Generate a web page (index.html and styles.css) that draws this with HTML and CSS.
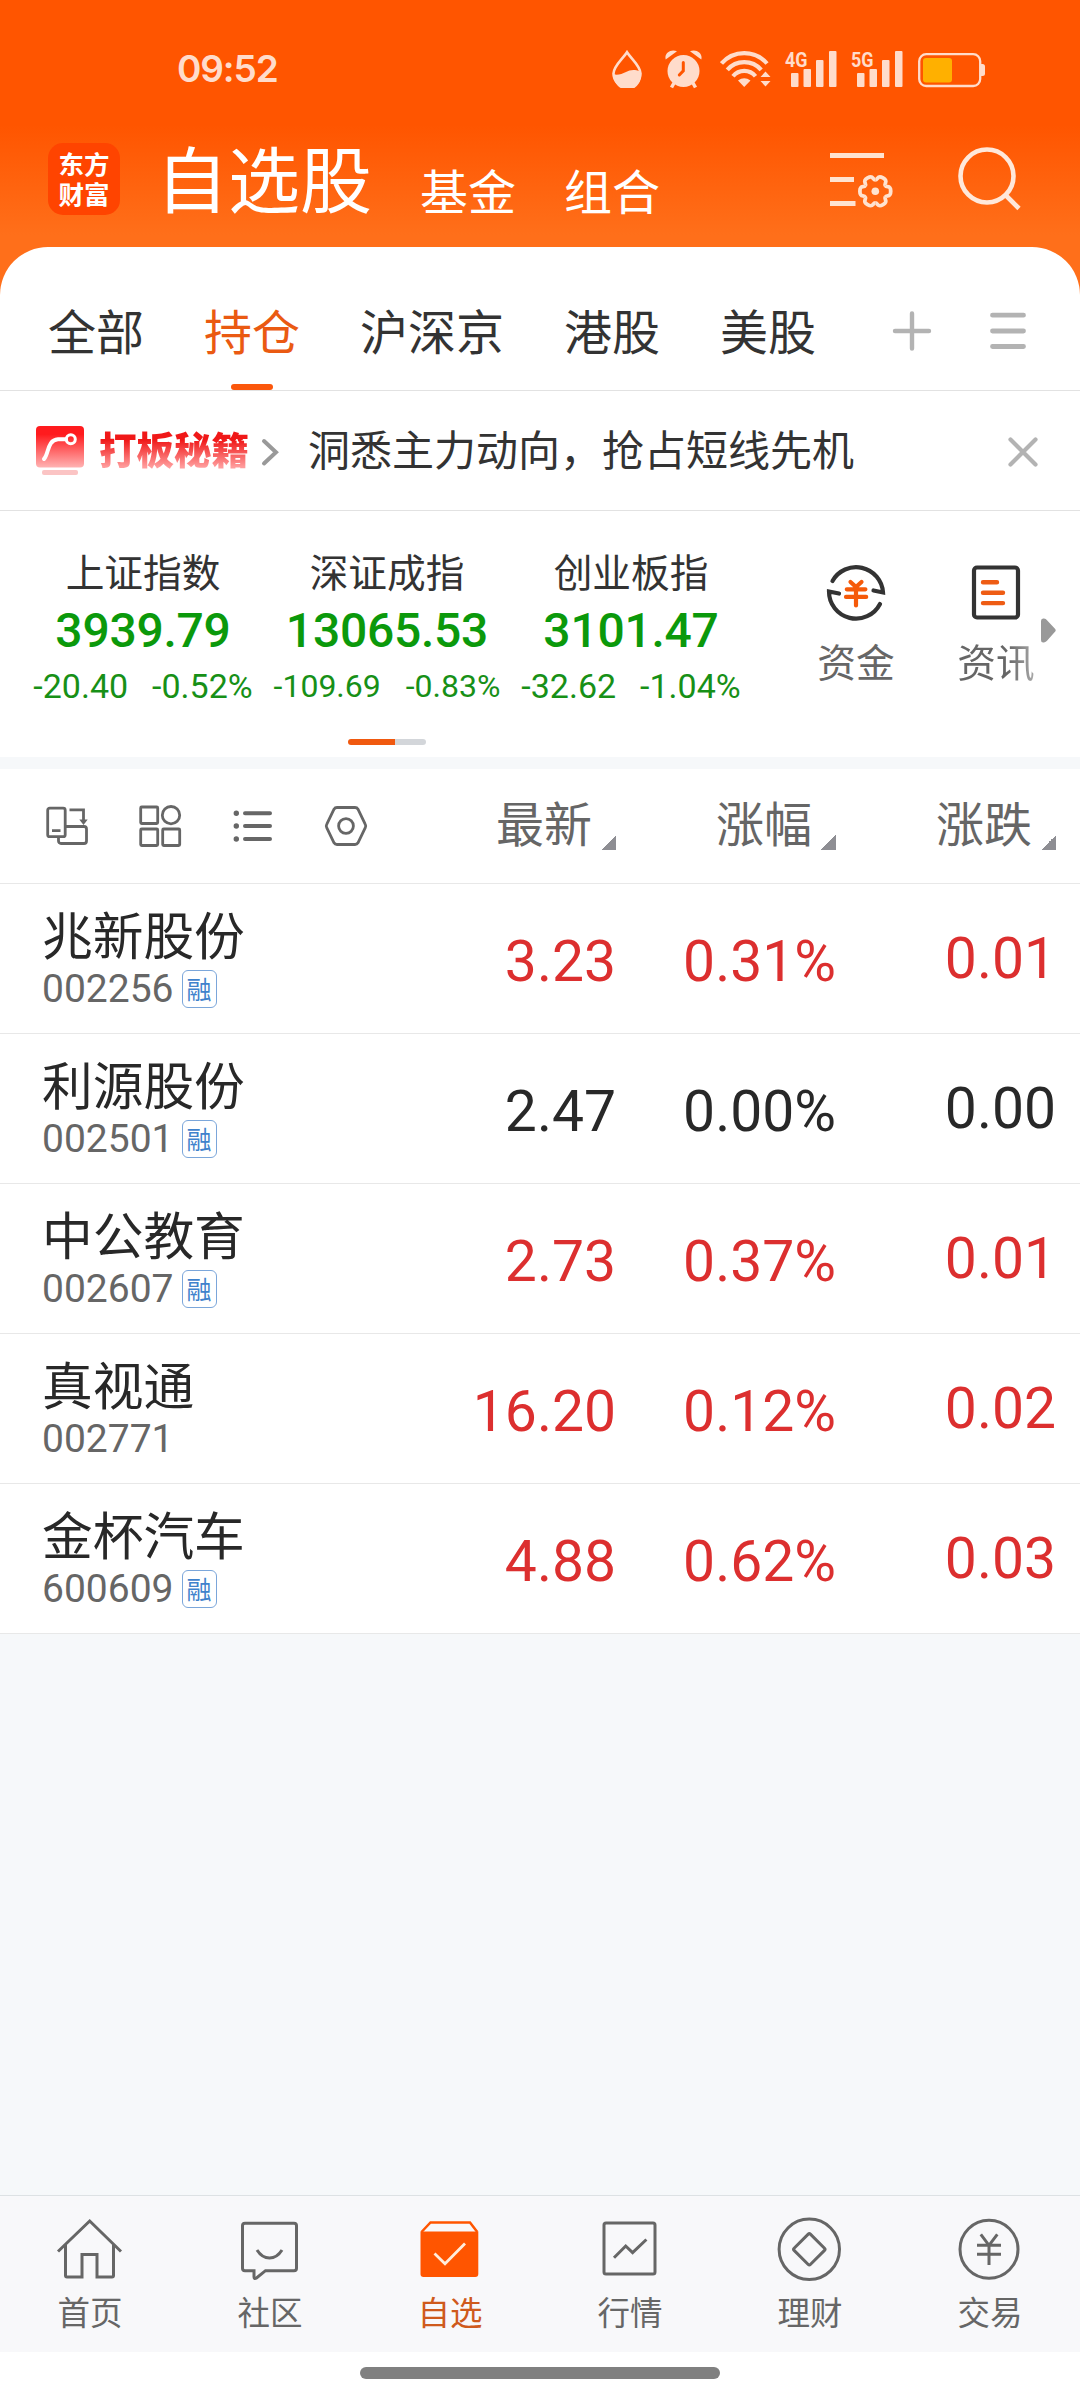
FILE: index.html
```html
<!DOCTYPE html>
<html lang="zh-CN">
<head>
<meta charset="utf-8">
<title>自选股</title>
<link rel="stylesheet" href="styles.css">
</head>
<body>
<div class="app">
  <div class="hero">
    <div class="status">
      <span class="time">09:52</span>
      <div class="status-icons">
        <svg class="i-drop" width="30" height="38" viewBox="0 0 30 38"><path d="M15 2.2C11 8.500 1.500 16 1.500 23.500a13.500 13.500 0 0 0 27 0C28.500 16 19 8.500 15 2.200z" fill="none" stroke="#ffdccb" stroke-width="2.600"/><path d="M2 24.500c5 .5 8-.5 12-2.500s8-3 14-.5a13.500 13.500 0 1 1-26 3z" fill="#ffdccb"/></svg>
        <svg class="i-alarm" width="37" height="39" viewBox="0 0 37 39"><g fill="#ffdccb"><circle cx="18.500" cy="21" r="16"/><path d="M.7 9.500C-1 3 6-1.500 12 1.300zM36.300 9.500C38 3 31-1.500 25 1.300z"/></g><path d="M9 33l-2.500 4.500M28 33l2.500 4.500" stroke="#ffdccb" stroke-width="3.500"/><path d="M18.300 12.500v8.300l-4 4.200" fill="none" stroke="#ff5500" stroke-width="3" stroke-linecap="round"/></svg>
        <svg class="i-wifi" width="51" height="38" viewBox="0 0 51 38"><g fill="none" stroke="#ffdccb" stroke-width="4.200"><path d="M1.500 13.500A30 30 0 0 1 47 13.500M7.300 19.800A22.500 22.500 0 0 1 41.200 19.800M13 26.300A14.500 14.500 0 0 1 35.500 26.300"/></g><g fill="#ffdccb"><path d="M18 30.500Q24.200 26 30.500 30.500L24.200 37zM40.500 27l5-5.500 5 5.500zM40.500 31h10l-5 5.500z"/></g></svg>
        <svg class="i-sig" width="52" height="38" viewBox="0 0 52 38" fill="#ffdccb"><text x="0" y="16.500" class="net" textLength="22.500" lengthAdjust="spacingAndGlyphs">4G</text><rect x="6" y="23" width="7.500" height="14" rx="1"/><rect x="18.500" y="19" width="7.500" height="18" rx="1"/><rect x="31" y="10" width="7.500" height="27" rx="1"/><rect x="44" y="1" width="7.500" height="36" rx="1"/></svg>
        <svg class="i-sig" width="52" height="38" viewBox="0 0 52 38" fill="#ffdccb"><text x="0" y="16.500" class="net" textLength="22.500" lengthAdjust="spacingAndGlyphs">5G</text><rect x="6" y="23" width="7.500" height="14" rx="1"/><rect x="18.500" y="19" width="7.500" height="18" rx="1"/><rect x="31" y="10" width="7.500" height="27" rx="1"/><rect x="44" y="1" width="7.500" height="36" rx="1"/></svg>
        <svg class="i-batt" width="68" height="35" viewBox="0 0 68 35"><rect x="1.200" y="1.200" width="61" height="31.800" rx="7" fill="none" stroke="#ffdccb" stroke-width="2.300"/><rect x="5" y="5" width="29" height="24.500" rx="3" fill="#ffb000"/><path d="M63 11h1.500q2.500 0 2.500 2.500v7q0 2.500-2.500 2.500H63z" fill="#ffdccb"/></svg>
      </div>
    </div>
    <header class="header">
      <div class="logo"><span>东方</span><span>财富</span></div>
      <h1 class="title">自选股</h1>
      <span class="seg">基金</span>
      <span class="seg">组合</span>
      <svg class="i-config" width="64" height="60" viewBox="0 0 64 60" fill="none" stroke="#ffe3d0"><path d="M0 5.500h54M0 29.500h24M0 53.500h25.500" stroke-width="4.800"/><g transform="translate(45.300 41.300)" stroke-width="3.800"><path d="M10-5.800C11.500-3.200 15.400-6.800 15.400 0S11.500 3.200 10 5.800"/><path d="M10-5.800C11.500-3.200 15.400-6.800 15.400 0S11.500 3.200 10 5.800" transform="rotate(60)"/><path d="M10-5.800C11.500-3.200 15.400-6.800 15.400 0S11.500 3.200 10 5.800" transform="rotate(120)"/><path d="M10-5.800C11.500-3.200 15.400-6.800 15.400 0S11.500 3.200 10 5.800" transform="rotate(180)"/><path d="M10-5.800C11.500-3.200 15.400-6.800 15.400 0S11.500 3.200 10 5.800" transform="rotate(240)"/><path d="M10-5.800C11.500-3.200 15.400-6.800 15.400 0S11.500 3.200 10 5.800" transform="rotate(300)"/><circle r="3.800" fill="#ffe3d0" stroke="none"/></g></svg>
      <svg class="i-search" width="66" height="66" viewBox="0 0 66 66" fill="none" stroke="#ffe8da" stroke-width="4.600"><circle cx="31" cy="31" r="26.500"/><path d="M49.500 50L63 63.500"/></svg>
    </header>
    <nav class="tabs">
      <span class="tab">全部</span>
      <span class="tab on">持仓</span>
      <span class="tab">沪深京</span>
      <span class="tab">港股</span>
      <span class="tab">美股</span>
      <svg class="i-plus" width="40" height="42" viewBox="0 0 40 42" stroke="#b3b3b3" stroke-width="4.400" stroke-linecap="round"><path d="M3 21h34M20 3.500v35"/></svg>
      <svg class="i-menu" width="38" height="42" viewBox="0 0 38 42" stroke="#b3b3b3" stroke-width="4.800" stroke-linecap="round"><path d="M3.500 5.200h31M3.500 21h31M3.500 36.500h31"/></svg>
    </nav>
  </div>

  <div class="notice">
    <svg width="48" height="50" viewBox="0 0 48 50"><defs><linearGradient id="red" x1="0" y1="0" x2="0" y2="1"><stop offset="0.200" stop-color="#ff1b1e"/><stop offset="1" stop-color="#ffb3b3"/></linearGradient></defs><rect width="48" height="41.500" rx="4" fill="url(#red)"/><rect x="6" y="44" width="36" height="5" rx="2" fill="#fbc4c4"/><g fill="none" stroke="#fff" stroke-linecap="round"><path d="M8 33C13 28 11 14 22 13.300L30 13.300" stroke-width="4"/><circle cx="34.800" cy="13.300" r="4.500" stroke-width="3"/></g></svg>
    <b class="promo">打板秘籍</b>
    <svg class="i-chev" width="18" height="30" viewBox="0 0 18 30" fill="none" stroke="#999" stroke-width="4" stroke-linecap="round"><path d="M3 4l12 11.300L3 26.500"/></svg>
    <span class="slogan">洞悉主力动向，抢占短线先机</span>
    <svg class="i-close" width="32" height="32" viewBox="0 0 32 32" stroke="#b3b3b3" stroke-width="4.200" stroke-linecap="round"><path d="M3.500 3.500l25 25M28.500 3.500l-25 25"/></svg>
  </div>

  <section class="market">
    <div class="indices">
      <div class="index"><span class="iname">上证指数</span><span class="ival">3939.79</span><span class="ichg"><i>-20.40</i><i>-0.52%</i></span></div>
      <div class="index"><span class="iname">深证成指</span><span class="ival">13065.53</span><span class="ichg small"><i>-109.69</i><i>-0.83%</i></span></div>
      <div class="index"><span class="iname">创业板指</span><span class="ival">3101.47</span><span class="ichg"><i>-32.62</i><i>-1.04%</i></span></div>
      <div class="pager"></div>
    </div>
    <div class="action">
      <svg width="64" height="64" viewBox="0 0 64 64" fill="none" stroke-width="4.200" stroke-linecap="round"><path stroke="#333" d="M8.500 21A27 27 0 0 1 59 32.500L49.500 30.500M56 44A27 27 0 0 1 5 31.500L15 33.500"/><path stroke="#f55a0a" d="M26.500 22l5.500 5 5.500-5M22.800 29.300h18.600M22 36.900h20.200M32 27v18.500"/></svg>
      <span>资金</span>
    </div>
    <div class="action news">
      <svg width="64" height="64" viewBox="0 0 64 64" fill="none"><rect x="10" y="7.500" width="44" height="50" rx="3" stroke="#333" stroke-width="4.200"/><path d="M19 22.300h14M19 32.700h20M19 43.100h20" stroke="#ee5c14" stroke-width="4.400" stroke-linecap="round"/></svg>
      <span class="fade">资讯</span>
    </div>
    <svg class="i-more" width="15" height="25" viewBox="0 0 15 25" fill="#999"><path d="M0 3Q0 0 3 .6Q5 1 6 2.200L14.200 11Q15.200 12.300 14.200 13.600L6 22.800Q5 24 3 24.400Q0 25 0 22z"/></svg>
  </section>

  <section class="list">
    <div class="row head">
      <div class="tools">
        <svg width="46" height="46" viewBox="0 0 46 46" fill="none" stroke="#666" stroke-width="2.800"><rect x="3.700" y="5.200" width="17.500" height="28.500" rx="2"/><path d="M8 27.700h8.500M25.500 6.800h14V18M22 23.500h18a2.500 2.500 0 0 1 2.500 2.500v12a2.500 2.500 0 0 1-2.500 2.500H17a2.500 2.500 0 0 1-2.500-2.500V34"/><path d="M35.300 16.500h8.400l-4.200 5.500z" fill="#666" stroke="none"/></svg>
        <svg width="46" height="46" viewBox="0 0 46 46" fill="none" stroke="#666" stroke-width="2.800"><rect x="3.700" y="4" width="17" height="16.500" rx="1"/><circle cx="34" cy="12.200" r="8.700"/><rect x="3.700" y="26" width="17" height="16.500" rx="1"/><rect x="25.700" y="26" width="17" height="16.500" rx="1"/></svg>
        <svg width="46" height="46" viewBox="0 0 46 46" stroke="#666" stroke-linecap="round"><path d="M15 10.300h25M15 23h25M15 36h25" stroke-width="4"/><path d="M6.300 10.300h.01M6.300 23h.01M6.300 36h.01" stroke-width="5.400"/></svg>
        <svg width="46" height="46" viewBox="0 0 46 46" fill="none" stroke="#666" stroke-width="2.800"><path d="M14 4.500H32Q34 4.500 35 6.200L42.300 21.300Q43.200 23 42.300 24.700L35 39.800Q34 41.500 32 41.500H14Q12 41.500 11 39.800L3.700 24.700Q2.800 23 3.700 21.300L11 6.200Q12 4.500 14 4.500z"/><circle cx="23" cy="23" r="7.400"/></svg>
      </div>
      <span class="col">最新<em class="tri"></em></span>
      <span class="col">涨幅<em class="tri"></em></span>
      <span class="col">涨跌<em class="tri"></em></span>
    </div>
    <div class="row up"><div class="stock"><span class="name">兆新股份</span><span class="code">002256<em class="tag">融</em></span></div><span class="num">3.23</span><span class="num">0.31%</span><span class="num diff">0.01</span></div>
    <div class="row"><div class="stock"><span class="name">利源股份</span><span class="code">002501<em class="tag">融</em></span></div><span class="num">2.47</span><span class="num">0.00%</span><span class="num diff">0.00</span></div>
    <div class="row up"><div class="stock"><span class="name">中公教育</span><span class="code">002607<em class="tag">融</em></span></div><span class="num">2.73</span><span class="num">0.37%</span><span class="num diff">0.01</span></div>
    <div class="row up"><div class="stock"><span class="name">真视通</span><span class="code">002771</span></div><span class="num">16.20</span><span class="num">0.12%</span><span class="num diff">0.02</span></div>
    <div class="row up"><div class="stock"><span class="name">金杯汽车</span><span class="code">600609<em class="tag">融</em></span></div><span class="num">4.88</span><span class="num">0.62%</span><span class="num diff">0.03</span></div>
  </section>

  <nav class="bottom">
    <div class="item"><svg width="70" height="66" viewBox="0 0 70 66" fill="none" stroke="#666" stroke-width="3"><path d="M3 35.500L34.700 5L66 35.500M10.500 29v30.500q0 1.500 1.500 1.500h15V38.500h15V61h15q1.500 0 1.500-1.500V29"/></svg><span>首页</span></div>
    <div class="item"><svg width="70" height="66" viewBox="0 0 70 66" fill="none" stroke="#666" stroke-width="3"><path d="M10 7.300H59Q61.500 7.300 61.500 9.800V52.200Q61.500 54.700 59 54.700H30.500L21.500 62Q19 63.500 19 61V54.700H10Q7.500 54.700 7.500 52.200V9.800Q7.500 7.300 10 7.300z"/><path d="M22 34Q27 42 34.500 42T47 34"/></svg><span>社区</span></div>
    <div class="item on"><svg width="70" height="66" viewBox="0 0 70 66"><path d="M6.500 16L15.500 6.500H55L62.300 16" fill="#f8f8fa" stroke="#ff5500" stroke-width="2.500"/><path d="M5.500 15.500H63.300V58q0 3-3 3H8.500q-3 0-3-3z" fill="#ff5500"/><path d="M19.500 37.500L30 47.700L50 27.500" fill="none" stroke="#ffeddc" stroke-width="2.800"/></svg><span>自选</span></div>
    <div class="item"><svg width="70" height="66" viewBox="0 0 70 66" fill="none" stroke="#666" stroke-width="3"><rect x="9" y="7" width="51" height="51" rx="2"/><path d="M19 41.700L30.700 30L37.600 36.700L51.400 23.500"/></svg><span>行情</span></div>
    <div class="item"><svg width="70" height="66" viewBox="0 0 70 66" fill="none" stroke="#666" stroke-width="3"><circle cx="34.300" cy="33.300" r="30.200"/><rect x="-11.500" y="-11.500" width="23" height="23" rx="1.500" transform="translate(34.300 33.300) rotate(45)"/></svg><span>理财</span></div>
    <div class="item"><svg width="70" height="66" viewBox="0 0 70 66" fill="none" stroke="#666" stroke-width="3"><circle cx="34" cy="33.300" r="29"/><path d="M25.800 18.300L34 29.300L42.300 18.300M22 29.300h24M22 38.300h24M34 29v20"/></svg><span>交易</span></div>
  </nav>
  <div class="gesture"><div class="handle"></div></div>
</div>
</body>
</html>
```
FILE: styles.css
```css
* { box-sizing: border-box; }

body {
  margin: 0;
  font-family: Roboto, "Noto Sans CJK SC", sans-serif;
  color: #333;
}

svg { display: block; flex: none; }
em, i { font-style: normal; }

.app {
  display: flex;
  flex-direction: column;
  width: 1080px;
  height: 2400px;
  background: #f6f8fa;
}

/* Orange area: status bar, header and rounded tab bar */
.hero { background: linear-gradient(#ff5500 125px, #ff6f1a 235px); }

.status {
  display: flex;
  height: 100px;
  padding: 50px 94px 0 177px;
}
.time {
  font: 600 37px/38px Inter, sans-serif;
  letter-spacing: -1.1px;
  color: #ffdccb;
}
.status-icons { display: flex; margin-left: auto; }
.i-alarm { margin-left: 23px; }
.i-wifi { margin-left: 18px; }
.i-sig { margin-left: 14px; overflow: visible; }
.i-batt { margin: 3px 0 0 15px; }
.net { font: 700 21px Roboto, sans-serif; }

.header {
  display: flex;
  align-items: flex-start;
  height: 147px;
  padding: 0 58px 0 48px;
  font-family: "Noto Sans CJK SC", sans-serif;
  color: #fff;
}
.logo {
  display: flex;
  flex-direction: column;
  width: 72px;
  height: 72px;
  margin-top: 43px;
  padding-top: 5px;
  border-radius: 15px;
  background: #ff4400;
  font-size: 25.500px;
  font-weight: 700;
  line-height: 30px;
  text-align: center;
}
.title {
  margin: 39px 0 0 36px;
  font-size: 72px;
  font-weight: 400;
  line-height: 73px;
}
.seg {
  margin: 65px 0 0 48px;
  font-size: 48px;
  line-height: 48px;
}
.i-config { margin: 50px 0 0 auto; }
.i-search { margin: 45px 0 0 62px; }

.tabs {
  display: flex;
  gap: 60px;
  height: 144px;
  padding: 57px 52px 0 48px;
  border-bottom: 1px solid #e2e2e2;
  border-radius: 48px 48px 0 0;
  background: #fff;
  font-family: "Noto Sans CJK SC", sans-serif;
  font-size: 48px;
  line-height: 50px;
}
.tab.on {
  display: flex;
  flex-direction: column;
  align-items: center;
  color: #ea5a12;
}
.tab.on::after {
  content: "";
  width: 42px;
  height: 6px;
  margin-top: 30px;
  border-radius: 3px;
  background: #fb570c;
}
.i-plus { margin: 6px 0 0 16px; }
.i-menu { margin: 6px 0 0 -3px; }

.notice {
  display: flex;
  align-items: center;
  height: 120px;
  padding: 0 41px 0 36px;
  border-bottom: 1px solid #e2e2e2;
  background: #fff;
  font-family: "Noto Sans CJK SC", sans-serif;
}
.promo {
  margin: -6px 0 0 15px;
  background: linear-gradient(#f01818 35%, #ff9c9c 85%);
  background-clip: text;
  -webkit-background-clip: text;
  color: transparent;
  font-size: 37.500px;
  font-weight: 900;
  line-height: 54px;
}
.i-chev { margin: 2px 0 0 12px; }
.slogan {
  margin: -5px 0 0 29px;
  font-size: 42px;
  line-height: 50px;
}
.i-close { margin: 3px 0 0 auto; }

/* Index quotes and shortcuts */
.market {
  display: flex;
  height: 246px;
  padding-left: 21px;
  background: #fff;
}
.indices {
  display: grid;
  grid-template-columns: repeat(3, 244px);
  grid-template-rows: 228px 6px;
}
.index {
  display: flex;
  flex-direction: column;
  align-items: center;
  padding-top: 38px;
}
.iname {
  font-family: "Noto Sans CJK SC", sans-serif;
  font-size: 38.700px;
  line-height: 42px;
}
.ival {
  margin-top: 10px;
  font-size: 48px;
  font-weight: 500;
  letter-spacing: -0.250px;
  line-height: 60px;
  color: #0b990b;
}
.ichg {
  display: flex;
  gap: 24px;
  margin-top: 5px;
  font-size: 34px;
  line-height: 40px;
  color: #179017;
}
.ichg.small { gap: 25px; font-size: 32px; line-height: 41px; }
.pager {
  grid-column: 2;
  justify-self: center;
  width: 78px;
  height: 6px;
  border-radius: 3px;
  background: linear-gradient(90deg, #f0590f 47px, #d3d6da 47px);
}
.action {
  display: flex;
  flex-direction: column;
  align-items: center;
  width: 78px;
  margin: 49px 0 0 64px;
  font-family: "Noto Sans CJK SC", sans-serif;
  font-size: 38.700px;
  line-height: 42px;
  color: #666;
}
.action span { margin-top: 15px; }
.action.news { margin-left: 62px; }
.fade {
  background: linear-gradient(90deg, #666 65%, #aaa);
  background-clip: text;
  -webkit-background-clip: text;
  color: transparent;
}
.i-more { margin: 107px 0 0 6px; }

/* Watch list */
.list { margin-top: 12px; background: #fff; }
.row {
  display: grid;
  grid-template-columns: 352px 220px 220px 220px;
  height: 150px;
  padding-left: 44px;
  border-bottom: 1px solid #e8e8e8;
  color: #282828;
}
.row.head {
  height: 115px;
  align-items: center;
  color: #666;
  font-family: "Noto Sans CJK SC", sans-serif;
}
.tools { display: flex; gap: 47px; }
.col {
  display: flex;
  justify-content: flex-end;
  font-size: 48px;
  line-height: 50px;
  padding-bottom: 6px;
}
.tri {
  width: 15px;
  height: 15px;
  margin: 39px 0 0 9px;
  background: linear-gradient(135deg, transparent 50%, #8e8e93 50%);
}
.stock { display: flex; flex-direction: column; padding-top: 22px; }
.name {
  margin-left: -2px;
  font-family: "Noto Sans CJK SC", sans-serif;
  font-size: 50.700px;
  line-height: 54px;
}
.code {
  display: flex;
  align-items: center;
  margin: 10px 0 0 -2px;
  font-size: 39px;
  line-height: 38px;
  color: #666;
}
.tag {
  width: 35px;
  height: 38px;
  margin-left: 8px;
  border: 1.500px solid #7ba6da;
  border-radius: 6px;
  font-family: "Noto Sans CJK SC", sans-serif;
  font-size: 25px;
  line-height: 34px;
  text-align: center;
  color: #3f82cc;
}
.num {
  align-self: center;
  padding-top: 6px;
  font-size: 57px;
  line-height: 66px;
  text-align: right;
}
.diff { padding-top: 0; }
.up .num { color: #dc2f2f; }

/* Bottom navigation */
.bottom {
  display: grid;
  grid-template-columns: repeat(6, 180px);
  height: 157px;
  margin-top: auto;
  border-top: 1px solid #dde1e4;
  background: #f8f8fa;
}
.item {
  display: flex;
  flex-direction: column;
  align-items: center;
  padding-top: 20px;
  font-family: "Noto Sans CJK SC", sans-serif;
  font-size: 32.500px;
  line-height: 36px;
  color: #666;
}
.item span { margin-top: 11px; }
.item.on { color: #cf5a1c; }

.gesture { height: 48px; padding-top: 15px; background: #fff; }
.handle { width: 360px; height: 12px; margin: 0 auto; border-radius: 6px; background: #808080; }
```
